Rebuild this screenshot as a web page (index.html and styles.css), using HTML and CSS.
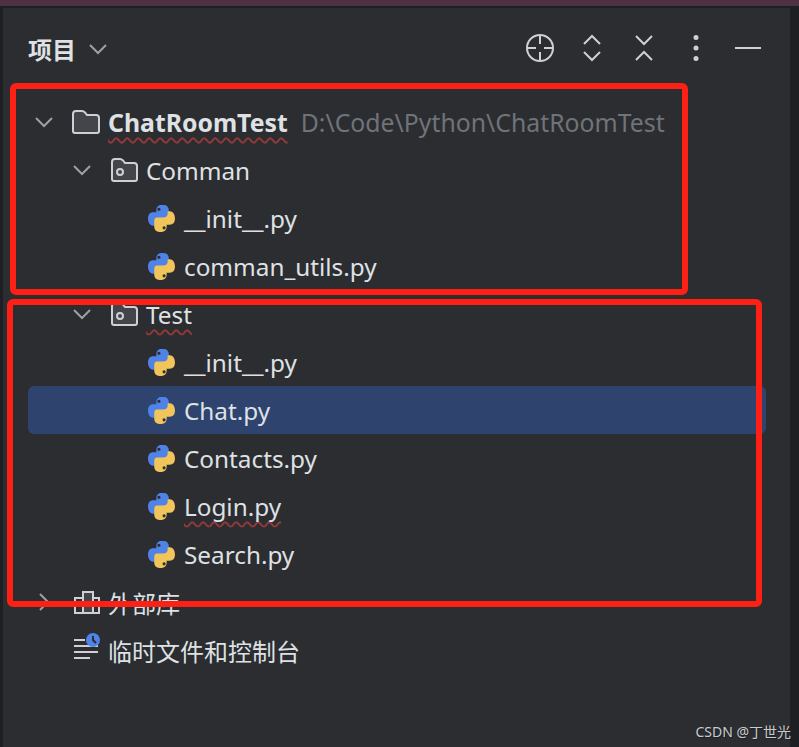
FILE: index.html
```html
<!DOCTYPE html>
<html lang="zh-CN">
<head>
    <meta charset="UTF-8">
    <title>项目</title>
    <link rel="stylesheet" href="styles.css">
</head>
<body>
    <svg class="defs" width="0" height="0">
        <symbol id="py" viewBox="0 0 28 28">
            <path fill="#4f83e8" d="M9 9V6c0-3 2-5 5-5h2c3 0 5 2 5 5v6c0 2-1 3-3 3h-6c-3 0-4 2-4 4v2H6c-3 0-5-3-5-7s2-6 5-6h8V9z"/>
            <circle cx="11.5" cy="5" r="1.5" fill="#2b2d30"/>
            <path fill="#f2c55c" d="M19 19v3c0 3-2 5-5 5h-2c-3 0-5-2-5-5v-6c0-2 1-3 3-3h6c3 0 4-2 4-4V7h2c3 0 5 3 5 7s-2 6-5 6h-8v-1z"/>
            <circle cx="16.5" cy="23" r="1.5" fill="#2b2d30"/>
        </symbol>
        <symbol id="chev-down" viewBox="0 0 18 18">
            <path d="M1 5l8 8 8-8" fill="none" stroke="#9da0a8" stroke-width="2"/>
        </symbol>
        <symbol id="module" viewBox="0 0 28 26">
            <path d="M2 5c0-2 1-3 3-3h5c1 0 2 .5 3 1.500l2 2.500h9c2 0 3 1 3 3v13c0 1-1 2-2 2H4c-1 0-2-1-2-2z" fill="#43454a" stroke="#ced0d6" stroke-width="2"/>
            <circle cx="10" cy="15" r="3" fill="none" stroke="#ced0d6" stroke-width="2"/>
        </symbol>
    </svg>

    <div class="top-strip"></div>
    <div class="main">
        <div class="side-left"></div>
        <div class="panel">
            <div class="header">
                <div class="title">项目
                    <svg class="title-chev" width="18" height="18"><use href="#chev-down"/></svg>
                </div>
                <div class="tools">
                    <div class="tool">
                        <svg width="30" height="30" viewBox="0 0 30 30" fill="none" stroke="#ced0d6" stroke-width="2">
                            <circle cx="15" cy="15" r="13"/>
                            <path d="M15 2v9M15 19v9M2 15h9M19 15h9"/>
                        </svg>
                    </div>
                    <div class="tool">
                        <svg width="18" height="28" viewBox="0 0 18 28" fill="none" stroke="#ced0d6" stroke-width="2">
                            <path d="M1 10l8-8 8 8M1 18l8 8 8-8"/>
                        </svg>
                    </div>
                    <div class="tool">
                        <svg width="18" height="28" viewBox="0 0 18 28" fill="none" stroke="#ced0d6" stroke-width="2">
                            <path d="M1 2l8 8 8-8M1 26l8-8 8 8"/>
                        </svg>
                    </div>
                    <div class="tool">
                        <svg width="6" height="28" viewBox="0 0 6 28" fill="#ced0d6">
                            <circle cx="3" cy="3.500" r="2.500"/>
                            <circle cx="3" cy="14" r="2.500"/>
                            <circle cx="3" cy="24.500" r="2.500"/>
                        </svg>
                    </div>
                    <div class="tool">
                        <svg width="26" height="2" viewBox="0 0 26 2" fill="#ced0d6">
                            <rect width="26" height="2"/>
                        </svg>
                    </div>
                </div>
            </div>

            <div class="tree">
                <div class="row depth-0">
                    <svg class="chev" width="18" height="18"><use href="#chev-down"/></svg>
                    <svg class="icon" width="28" height="24" viewBox="0 0 28 24">
                        <path d="M1 4c0-2 1-3 3-3h6c1 0 2 .5 3 1.500l2 2.500h9c2 0 3 1 3 3v13c0 1-1 2-2 2H3c-1 0-2-1-2-2z" fill="#43454a" stroke="#ced0d6" stroke-width="2"/>
                    </svg>
                    <span class="name bold squiggle">ChatRoomTest</span>
                    <span class="path">D:\Code\Python\ChatRoomTest</span>
                </div>
                <div class="row depth-1">
                    <svg class="chev" width="18" height="18"><use href="#chev-down"/></svg>
                    <svg class="icon" width="28" height="26"><use href="#module"/></svg>
                    <span class="name">Comman</span>
                </div>
                <div class="row depth-2">
                    <svg class="icon" width="29" height="29"><use href="#py"/></svg>
                    <span class="name">__init__.py</span>
                </div>
                <div class="row depth-2">
                    <svg class="icon" width="29" height="29"><use href="#py"/></svg>
                    <span class="name">comman_utils.py</span>
                </div>
                <div class="row depth-1">
                    <svg class="chev" width="18" height="18"><use href="#chev-down"/></svg>
                    <svg class="icon" width="28" height="26"><use href="#module"/></svg>
                    <span class="name squiggle">Test</span>
                </div>
                <div class="row depth-2">
                    <svg class="icon" width="29" height="29"><use href="#py"/></svg>
                    <span class="name">__init__.py</span>
                </div>
                <div class="row depth-2 selected">
                    <svg class="icon" width="29" height="29"><use href="#py"/></svg>
                    <span class="name">Chat.py</span>
                </div>
                <div class="row depth-2">
                    <svg class="icon" width="29" height="29"><use href="#py"/></svg>
                    <span class="name">Contacts.py</span>
                </div>
                <div class="row depth-2">
                    <svg class="icon" width="29" height="29"><use href="#py"/></svg>
                    <span class="name squiggle">Login.py</span>
                </div>
                <div class="row depth-2">
                    <svg class="icon" width="29" height="29"><use href="#py"/></svg>
                    <span class="name">Search.py</span>
                </div>
                <div class="row depth-0">
                    <svg class="chev" width="18" height="18" viewBox="0 0 18 18">
                        <path d="M5 1l8 8-8 8" fill="none" stroke="#9da0a8" stroke-width="2"/>
                    </svg>
                    <svg class="icon" width="28" height="26" viewBox="0 0 28 26" fill="none" stroke="#ced0d6" stroke-width="2">
                        <path d="M3 9h24v15H3z"/>
                        <path d="M11 3h10v21H11z" fill="#43454a"/>
                    </svg>
                    <span class="name cjk">外部库</span>
                </div>
                <div class="row depth-0 no-chev">
                    <svg class="icon console" width="28" height="28" viewBox="0 0 28 28">
                        <path d="M2 7h11M2 13h24M2 19h24M2 25h16" stroke="#ced0d6" stroke-width="2"/>
                        <circle cx="21" cy="7" r="7" fill="#4f83e8"/>
                        <path d="M21 3v4l3 3" fill="none" stroke="#2b2d30" stroke-width="2"/>
                    </svg>
                    <span class="name cjk">临时文件和控制台</span>
                </div>
            </div>
        </div>
        <div class="side-right"></div>
    </div>

    <div class="mark mark-top"></div>
    <div class="mark mark-bottom"></div>
    <div class="watermark">CSDN @丁世光</div>
</body>
</html>
```

FILE: styles.css
```css
html, body {
    margin: 0;
    height: 100%;
    overflow: hidden;
}
body {
    background: #2b2d30;
    color: #dfe1e5;
    font-family: "Noto Sans", "Noto Sans CJK SC", sans-serif;
    font-size: 24px;
    display: flex;
    flex-direction: column;
}
.defs {
    position: absolute;
}
.top-strip {
    height: 6px;
    flex: none;
    background: #4e3145;
    border-bottom: 2px solid #1e1f22;
}
.main {
    flex: 1;
    display: flex;
    min-height: 0;
}
.side-left {
    width: 3px;
    flex: none;
    background: #1e1f22;
}
.side-right {
    width: 9px;
    flex: none;
    background: #1e1f22;
}
.panel {
    flex: 1;
    min-width: 0;
}
.header {
    height: 90px;
    display: flex;
    align-items: center;
    justify-content: space-between;
    padding: 0 16px 10px 25px;
    box-sizing: border-box;
}
.title {
    font-weight: 700;
    font-size: 24px;
    display: flex;
    align-items: center;
    gap: 13px;
    color: #dfe1e5;
}
.title-chev {
    margin-top: 1px;
}
.tools {
    display: flex;
    align-items: center;
}
.tool {
    width: 52px;
    display: flex;
    justify-content: center;
}
.tree {
    display: flex;
    flex-direction: column;
}
.row {
    height: 48px;
    display: flex;
    align-items: center;
    white-space: nowrap;
    margin-left: 25px;
    margin-right: 24px;
    border-radius: 6px;
}
.row.depth-0 {
    padding-left: 7px;
}
.row.depth-1 {
    padding-left: 45px;
}
.row.depth-2 {
    padding-left: 119px;
}
.row.no-chev {
    padding-left: 44px;
}
.chev {
    margin-right: 19px;
    flex: none;
}
.icon {
    flex: none;
    margin-right: 8px;
}
.console {
    margin-top: -6px;
}
.selected {
    background: #2e436e;
}
.name {
    font-size: 24.3px;
}
.name.cjk {
    font-size: 24px;
}
.name.bold {
    font-weight: 700;
    font-size: 24.8px;
}
.path {
    margin-left: 13px;
    font-size: 24.8px;
    color: #6f737a;
}
.squiggle {
    text-decoration: underline wavy #93393a 1.5px;
    text-decoration-skip-ink: none;
    text-underline-offset: 5px;
}
.mark {
    position: absolute;
    border: 6px solid #fe2014;
    border-radius: 6px;
    box-sizing: border-box;
}
.mark-top {
    left: 10px;
    top: 83px;
    width: 678px;
    height: 212px;
}
.mark-bottom {
    left: 7px;
    top: 299px;
    width: 755px;
    height: 308px;
}
.watermark {
    position: absolute;
    right: 8px;
    bottom: 6px;
    font-size: 14px;
    color: #c8cacf;
    text-shadow: 1px 1px 1px #1e1f22;
}
```
